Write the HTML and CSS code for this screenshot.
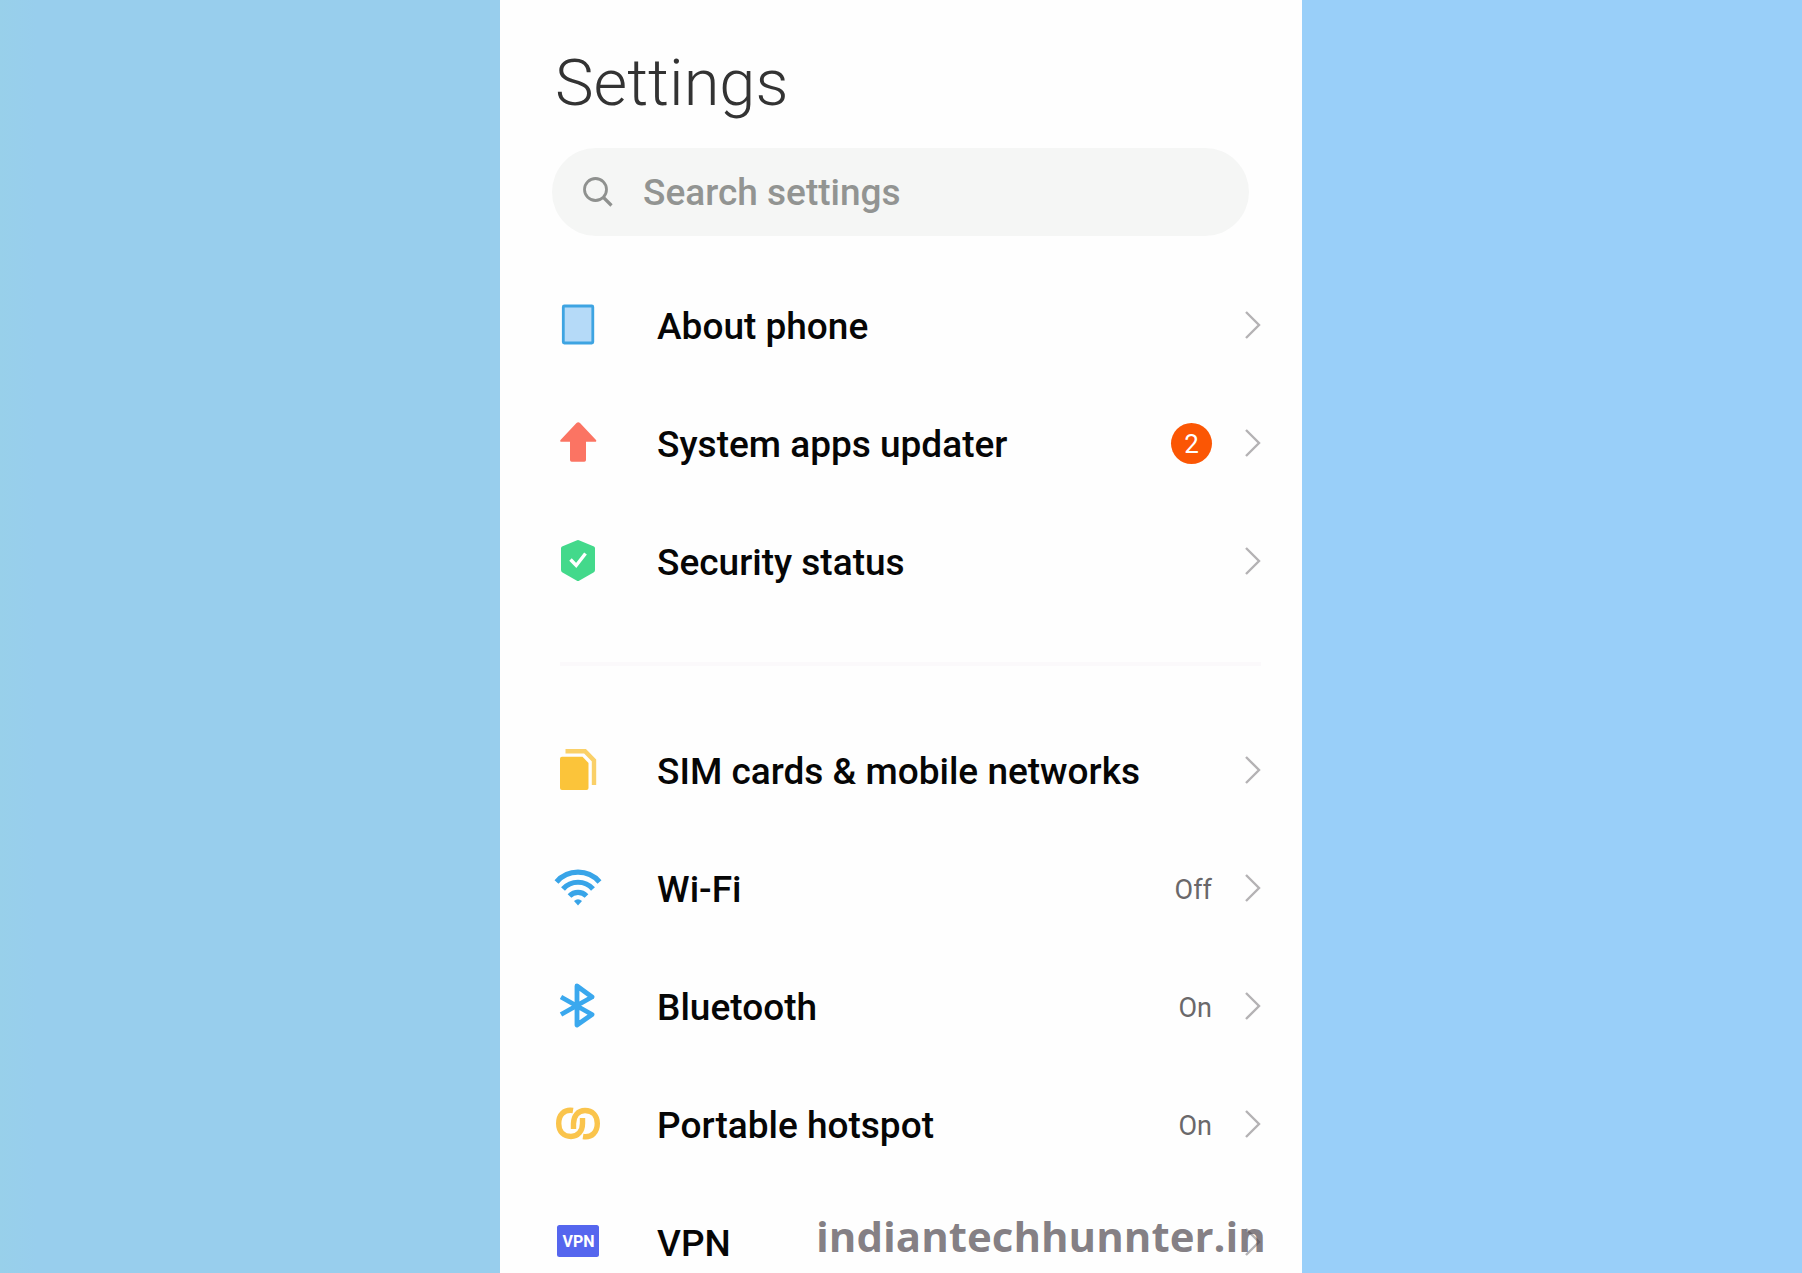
FILE: index.html
```html
<!DOCTYPE html>
<html lang="en">
<head>
    <meta charset="UTF-8">
    <meta name="viewport" content="width=device-width, initial-scale=1.0">
    <title>Settings</title>
    <link rel="stylesheet" href="styles.css">
</head>
<body>
    <!-- Shared chevron -->
    <svg class="defs" aria-hidden="true">
        <symbol id="chevron" viewBox="0 0 16 28">
            <path d="M1 1L14 14L1 27" fill="none" stroke="#b4b2b4" stroke-width="2.4"/>
        </symbol>
    </svg>

    <main class="phone">
        <h1 class="title">Settings</h1>

        <form class="search">
            <label class="search-label" for="search" aria-label="Search settings">
                <svg class="search-icon" viewBox="0 0 30 30">
                    <circle cx="12.5" cy="12.5" r="11" fill="none" stroke="#8f918f" stroke-width="2.8"/>
                    <path d="M20 20L28.5 28.5" stroke="#8f918f" stroke-width="3.2"/>
                </svg>
            </label>
            <input class="search-input" id="search" type="text" placeholder="Search settings">
        </form>

        <nav class="list">
            <a class="row" href="#about">
                <svg class="icon" viewBox="0 0 48 48">
                    <rect x="9.3" y="5" width="29.5" height="37" rx="1" fill="#b5daf8" stroke="#3ea4e2" stroke-width="2.8"/>
                </svg>
                <span class="name">About phone</span>
                <svg class="chevron"><use href="#chevron"/></svg>
            </a>
            <a class="row" href="#updater">
                <svg class="icon" viewBox="0 0 48 48">
                    <path d="M22.5 4Q24.2 2.6 26 4L42 21Q43 22.8 41 22.8H32V41Q32 42.7 30.3 42.7H17.7Q16 42.7 16 41V22.8H7.5Q5.5 22.8 6.5 21Z" fill="#fb7463"/>
                </svg>
                <span class="name">System apps updater</span>
                <span class="badge">2</span>
                <svg class="chevron"><use href="#chevron"/></svg>
            </a>
            <a class="row" href="#security">
                <svg class="icon" viewBox="0 0 48 48">
                    <path d="M22.5 3.5Q24 2.7 25.5 3.5L40 9.5Q41 10 41 11.5V33Q41 34.5 39.5 35.5L25.5 43.5Q24 44.5 22.5 43.5L8.5 35.5Q7 34.5 7 33V11.5Q7 10 8 9.5Z" fill="#43d98b"/>
                    <path d="M16.5 22.5L22.2 28.5L31.5 16.5" fill="none" stroke="#fff" stroke-width="3.4"/>
                </svg>
                <span class="name">Security status</span>
                <svg class="chevron"><use href="#chevron"/></svg>
            </a>
        </nav>

        <hr class="divider">

        <nav class="list">
            <a class="row" href="#sim">
                <svg class="icon" viewBox="0 0 48 48">
                    <path d="M8 10.7H28.5L34.5 17V42Q34.5 44 32.5 44H8Q6 44 6 42V12.7Q6 10.7 8 10.7Z" fill="#fbc43a"/>
                    <path d="M11.5 5.2H31L40 14.5V39" fill="none" stroke="#fad068" stroke-width="4.4"/>
                </svg>
                <span class="name">SIM cards &amp; mobile networks</span>
                <svg class="chevron"><use href="#chevron"/></svg>
            </a>
            <a class="row" href="#wifi">
                <svg class="icon" viewBox="0 0 48 48">
                    <g fill="none" stroke="#38a4e8" stroke-width="5.2">
                        <path d="M2.5 18A28.5 28.5 0 0 1 45.5 18"/>
                        <path d="M9 25A20 20 0 0 1 39 25"/>
                        <path d="M15.5 32A12 12 0 0 1 32.5 32"/>
                    </g>
                    <path d="M20 37Q24 33.5 28 37L24 41.5Z" fill="#38a4e8"/>
                </svg>
                <span class="name">Wi-Fi</span>
                <span class="value">Off</span>
                <svg class="chevron"><use href="#chevron"/></svg>
            </a>
            <a class="row" href="#bluetooth">
                <svg class="icon" viewBox="0 0 48 48">
                    <path d="M7 15L38 32.5L23 43V4L38 15L7 32.5" fill="none" stroke="#3aa8ee" stroke-width="4.8" stroke-linejoin="round"/>
                </svg>
                <span class="name">Bluetooth</span>
                <span class="value">On</span>
                <svg class="chevron"><use href="#chevron"/></svg>
            </a>
            <a class="row" href="#hotspot">
                <svg class="icon" viewBox="0 0 48 48">
                    <g fill="none" stroke="#fac44c" stroke-width="5.4">
                        <path d="M19 10.5C10 9 4.7 15 4.7 23.5S10 36.5 17 36.5S28.5 31 28.5 23.5V18"/>
                        <path d="M29 36.5C38 38 43.3 32 43.3 23.5S38 10.5 31 10.5S19.5 16 19.5 23.5V29"/>
                    </g>
                </svg>
                <span class="name">Portable hotspot</span>
                <span class="value">On</span>
                <svg class="chevron"><use href="#chevron"/></svg>
            </a>
            <a class="row" href="#vpn">
                <svg class="icon" viewBox="0 0 48 48">
                    <rect x="3" y="7" width="42" height="32" rx="2.5" fill="#5566ee"/>
                    <text class="vpn-text" x="24.5" y="29" text-anchor="middle">VPN</text>
                </svg>
                <span class="name">VPN</span>
                <svg class="chevron"><use href="#chevron"/></svg>
            </a>
        </nav>

        <p class="watermark">indiantechhunnter.in</p>
    </main>
</body>
</html>
```

FILE: styles.css
```css
* {
    box-sizing: border-box;
}

body {
    margin: 0;
    height: 100vh;
    overflow: hidden;
    font-family: Roboto, sans-serif;
    background: linear-gradient(to right, #98d0ea, #98ceed 2%, #98ceed 28%, #99cff9 72%);
}

.defs {
    display: none;
}

.phone {
    position: relative;
    width: 44.5%;
    height: 100vh;
    margin: 0 auto;
    overflow: hidden;
    background-color: #fefefe;
}

.title {
    margin: 0;
    padding: 43px 55px 25px;
    font-size: 65px;
    font-weight: 300;
    line-height: 80px;
    color: #333;
}

.search {
    display: flex;
    align-items: center;
    gap: 30px;
    height: 88px;
    margin: 0 53px 30px 52px;
    padding: 0 31px;
    border-radius: 44px;
    background-color: #f5f6f5;
}

.search-icon {
    display: block;
    width: 30px;
    height: 30px;
}

.search-input {
    flex: 1;
    min-width: 0;
    padding: 0;
    border: none;
    outline: none;
    background: none;
    font-family: inherit;
    font-size: 37px;
    font-weight: 500;
    color: #333;
}

.search-input::placeholder {
    color: #929492;
}

.row {
    display: flex;
    align-items: center;
    height: 118px;
    padding: 0 41px 0 54px;
    color: #060606;
    text-decoration: none;
}

.icon {
    width: 48px;
    height: 48px;
    margin-right: 55px;
}

.name {
    flex: 1;
    font-size: 37px;
    font-weight: 500;
    line-height: 44px;
    padding-top: 4px;
}

.value {
    font-size: 27px;
    color: #6a686a;
    padding-top: 4px;
}

.badge {
    width: 41px;
    height: 41px;
    border-radius: 50%;
    background-color: #fb5604;
    color: #fff;
    font-size: 26px;
    line-height: 42px;
    text-align: center;
}

.chevron {
    width: 16px;
    height: 28px;
    margin-left: 33px;
}

.divider {
    height: 4px;
    margin: 42px 41px 45px 60px;
    border: none;
    background-color: #fbf9fb;
}

.vpn-text {
    font-size: 16px;
    font-weight: 700;
    fill: #fff;
}

/* Sits on top of the last row */
.watermark {
    position: absolute;
    right: 36px;
    bottom: 9px;
    margin: 0;
    font-family: "Open Sans", sans-serif;
    font-size: 42px;
    font-weight: 700;
    line-height: 56px;
    color: rgba(70, 62, 70, 0.66);
}
```
